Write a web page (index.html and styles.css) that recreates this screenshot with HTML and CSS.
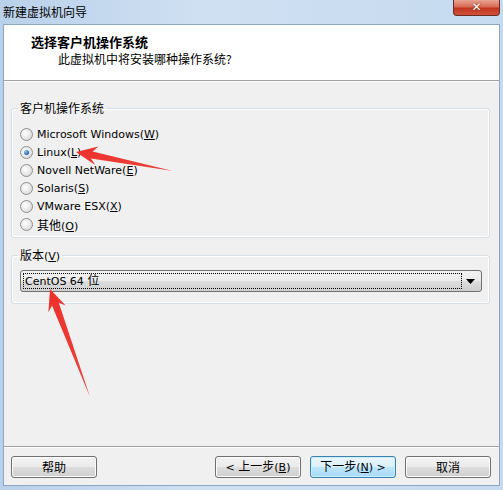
FILE: index.html
```html
<!DOCTYPE html>
<html>
<head>
<meta charset="utf-8">
<link rel="stylesheet" href="styles.css">
</head>
<body>
<div class="window">
  <div class="titlebar">
    <span class="title cjk">新建虚拟机向导</span>
    <span class="close">✕</span>
  </div>
  <div class="client">
    <div class="header">
      <div class="h-title">选择客户机操作系统</div>
      <div class="h-sub">此虚拟机中将安装哪种操作系统?</div>
    </div>
    <div class="content">
      <fieldset class="group g1">
        <legend class="cjk">客户机操作系统</legend>
        <div class="radio"><span class="dot"></span><span>Microsoft Windows(<u>W</u>)</span></div>
        <div class="radio checked"><span class="dot"></span><span>Linux(<u>L</u>)</span></div>
        <div class="radio"><span class="dot"></span><span>Novell NetWare(<u>E</u>)</span></div>
        <div class="radio"><span class="dot"></span><span>Solaris(<u>S</u>)</span></div>
        <div class="radio"><span class="dot"></span><span>VMware ESX(<u>X</u>)</span></div>
        <div class="radio"><span class="dot"></span><span><span class="cjk">其他</span>(<u>O</u>)</span></div>
      </fieldset>
      <fieldset class="group g2">
        <legend><span class="cjk">版本</span>(<u>V</u>)</legend>
        <div class="combo">
          <div class="combo-text"><span>CentOS 64 <span class="cjk">位</span></span></div>
          <div class="combo-arrow"><svg width="9" height="5" viewBox="0 0 9 5"><path d="M0 0H9L4.5 5Z" fill="#000"/></svg></div>
        </div>
      </fieldset>
    </div>
    <div class="footer">
      <button class="btn cjk">帮助</button>
      <div class="spacer"></div>
      <button class="btn">&lt; <span class="cjk">上一步</span>(<u>B</u>)</button>
      <button class="btn default"><span class="cjk">下一步</span>(<u>N</u>) &gt;</button>
      <button class="btn cjk">取消</button>
    </div>
  </div>
</div>
<svg class="arrows" width="503" height="490" viewBox="0 0 503 490">
  <defs>
    <linearGradient id="ar" x1="0" y1="0" x2="1" y2="1">
      <stop offset="0" stop-color="#f0302c"/>
      <stop offset="1" stop-color="#e8433b"/>
    </linearGradient>
  </defs>
  <polygon points="76,152 98.4,146.5 92.6,151.6 173,171 91,158.4 95.2,165" fill="url(#ar)"/>
  <polygon points="50,289 65.6,305.4 58.8,302.8 90,397 52,305.4 48.4,312.2" fill="url(#ar)"/>
</svg>
</body>
</html>
```
FILE: styles.css
```css
html, body {
  margin: 0;
  padding: 0;
}
body {
  width: 503px;
  height: 490px;
  overflow: hidden;
  position: relative;
  font-family: "DejaVu Sans", "Noto Sans CJK SC", sans-serif;
  font-size: 11px;
  color: #000;
  background: #c3d8ef;
}
.cjk {
  font-family: "Noto Sans CJK SC", sans-serif;
  font-size: 12px;
}
.window {
  width: 503px;
  height: 490px;
  display: flex;
  flex-direction: column;
  background: linear-gradient(90deg, #b9d1ea 0%, #cfe0f2 40%, #c6dbf0 100%);
}
.titlebar {
  height: 24px;
  display: flex;
  align-items: flex-start;
  justify-content: space-between;
}
.title {
  padding: 3px 0 0 3px;
  line-height: 17px;
  color: #000;
}
.close {
  width: 45px;
  height: 15px;
  margin-right: 3px;
  border: 1px solid #6b2a22;
  border-top: none;
  border-radius: 0 0 4px 4px;
  background: linear-gradient(#e8a493 0%, #d86a55 45%, #c2351f 55%, #d1533d 100%);
  color: #fff;
  font-family: "DejaVu Sans", sans-serif;
  font-weight: bold;
  font-size: 12px;
  line-height: 14px;
  text-align: center;
  text-shadow: 0 0 2px #5a1a10;
}
.client {
  flex: 1;
  margin: 0 3px 4px 3px;
  border: 1px solid #8ba5c5;
  background: #f0f0f0;
  display: flex;
  flex-direction: column;
}
.header {
  height: 56px;
  background: #fff;
  border-bottom: 1px solid #a0a0a0;
  box-shadow: 0 1px 0 #fff;
  padding-left: 27px;
  box-sizing: border-box;
  padding-top: 9px;
}
.h-title {
  font-family: "Noto Sans CJK SC", sans-serif;
  font-weight: bold;
  font-size: 13px;
  line-height: 16px;
}
.h-sub {
  font-family: "Noto Sans CJK SC", sans-serif;
  font-size: 12px;
  line-height: 16px;
  padding-left: 27px;
  margin-top: 1px;
}
.content {
  flex: 1;
  padding: 19px 9px 0 7px;
}
.group {
  margin: 0;
  border: 1px solid #d5dfe5;
  border-radius: 3px;
  box-shadow: inset 0 0 0 1px #fff;
  padding: 0 0 0 8px;
  min-width: 0;
}
.group legend {
  padding: 0 2px;
  margin-left: -2px;
  line-height: 16px;
  height: 16px;
}
.g1 {
  padding-top: 9px;
  padding-bottom: 4px;
}
.g2 {
  margin-top: 9px;
  padding-top: 7px;
  padding-bottom: 11px;
  padding-right: 7px;
}
.radio {
  height: 18px;
  display: flex;
  align-items: center;
  gap: 4px;
}
.dot {
  width: 11px;
  height: 11px;
  border-radius: 50%;
  border: 1px solid #8e8f8f;
  background: radial-gradient(circle at 40% 40%, #ffffff 0%, #e6e6e6 55%, #cfcfcf 100%);
  flex: none;
  display: flex;
  align-items: center;
  justify-content: center;
}
.checked .dot::after {
  content: "";
  width: 5px;
  height: 5px;
  border-radius: 50%;
  background: radial-gradient(circle at 35% 35%, #8fd0f5 0%, #2a6fb0 60%, #0f3f7a 100%);
}
.combo {
  height: 22px;
  box-sizing: border-box;
  border: 1px solid #707070;
  border-radius: 3px;
  background: linear-gradient(#f2f2f2 0%, #ebebeb 50%, #dddddd 51%, #cfcfcf 100%);
  display: flex;
  align-items: stretch;
  padding: 2px;
}
.combo-text {
  flex: 1;
  border: 1px dotted #000;
  padding-left: 1px;
  line-height: 14px;
  display: flex;
  align-items: center;
}
.combo-arrow {
  width: 17px;
  display: flex;
  align-items: center;
  justify-content: center;
}
.footer {
  height: 39px;
  border-top: 1px solid #a0a0a0;
  box-shadow: inset 0 1px 0 #fff;
  display: flex;
  align-items: flex-start;
  padding: 9px 8px 0 7px;
  box-sizing: border-box;
  gap: 10px;
}
.spacer {
  flex: 1;
}
.btn {
  width: 86px;
  height: 22px;
  margin: 0;
  padding: 0;
  border: 1px solid #707070;
  border-radius: 3px;
  background: linear-gradient(#f2f2f2 0%, #ebebeb 50%, #dddddd 51%, #cfcfcf 100%);
  box-shadow: inset 0 0 0 1px #fcfcfc;
  font-family: "DejaVu Sans", "Noto Sans CJK SC", sans-serif;
  font-size: 11px;
  color: #000;
  line-height: 18px;
}
.btn.cjk {
  font-family: "Noto Sans CJK SC", sans-serif;
  font-size: 12px;
}
.btn + .btn {
  margin-left: -1px;
}
.btn.default {
  border-color: #3c7fb1;
  background: linear-gradient(#eaf6fd 0%, #d9f0fc 50%, #bee6fd 51%, #a7d9f5 100%);
  box-shadow: inset 0 0 0 1px #c8f0ff;
}
.arrows {
  position: absolute;
  left: 0;
  top: 0;
  pointer-events: none;
}
```
